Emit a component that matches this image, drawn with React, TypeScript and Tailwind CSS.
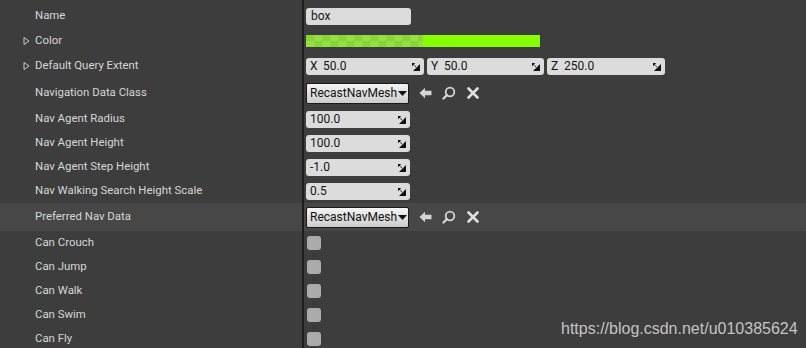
import React from "react";

const font = { fontFamily: "Roboto, 'Liberation Sans', sans-serif" };

function Spin() {
  return (
    <svg width="9" height="9" viewBox="0 0 9 9" className="shrink-0">
      <path d="M1 1 L4.2 1 L2.8 2.4 L5.2 4.8 L4.8 5.2 L2.4 2.8 L1 4.2 Z" fill="#111" />
      <path d="M9 2 L9 9 L2 9 Z" fill="#111" />
    </svg>
  );
}

function Tri() {
  return (
    <svg width="7" height="9" viewBox="0 0 7 9" className="absolute left-[23px] top-1/2 -translate-y-1/2">
      <path d="M1 1 L6 4.5 L1 8 Z" fill="none" stroke="#c8c8c8" strokeWidth="1" />
    </svg>
  );
}

function NumField({ value, w = "w-[104px]", prefix }: { value: string; w?: string; prefix?: string }) {
  return (
    <div className={`${w} h-[17px] rounded-[3px] bg-[#dcdcdc] flex items-center pl-[4px] pr-[4px] text-[12px] text-[#141414]`}>
      {prefix && <span className="w-[13px]">{prefix}</span>}
      <span className="flex-1">{value}</span>
      <Spin />
    </div>
  );
}

function ObjectPicker() {
  return (
    <div className="flex items-center">
      <div className="w-[103px] h-[21px] border border-[#1a1a1a] rounded-[2px] bg-gradient-to-b from-[#f4f4f4] to-[#cdcdcd] flex items-center pl-[3px] text-[12px] text-[#111]">
        <span>RecastNavMesh</span>
        <svg width="9" height="5" viewBox="0 0 9 5" className="ml-[1px] mt-[1px]">
          <path d="M0 0 L9 0 L4.5 5 Z" fill="#111" />
        </svg>
      </div>
      <svg width="13" height="12" viewBox="0 0 13 12" className="ml-[10px]">
        <path d="M0.5 6 L6 0.8 L6 3.8 L12.5 3.8 L12.5 8.2 L6 8.2 L6 11.2 Z" fill="#d4d4d4" />
      </svg>
      <svg width="14" height="14" viewBox="0 0 14 14" className="ml-[10px]">
        <circle cx="8" cy="6" r="4.3" fill="none" stroke="#d4d4d4" strokeWidth="1.8" />
        <path d="M5 9 L1.5 12.5" stroke="#d4d4d4" strokeWidth="2.4" strokeLinecap="round" />
      </svg>
      <svg width="12" height="12" viewBox="0 0 12 12" className="ml-[11px]">
        <path d="M1.5 1.5 L10.5 10.5 M10.5 1.5 L1.5 10.5" stroke="#e0e0e0" strokeWidth="2.6" strokeLinecap="round" />
      </svg>
    </div>
  );
}

function Check() {
  return <div className="w-[14px] h-[14px] rounded-[3px] bg-[#ababab] ml-[1px]" />;
}

function ColorBar() {
  const cells = Array.from({ length: 15 });
  return (
    <div className="flex w-[234px] h-[12px]">
      <div className="w-[117px] flex flex-col overflow-hidden">
        {[0, 1].map((r) => (
          <div key={r} className="flex h-[6px]">
            {cells.map((_, i) => (
              <div
                key={i}
                className={(i + r) % 2 === 0 ? "w-[8px] shrink-0 bg-[#86d534]" : "w-[8px] shrink-0 bg-[#93e044]"}
              />
            ))}
          </div>
        ))}
      </div>
      <div className="flex-1 bg-[#88ff00]" />
    </div>
  );
}

type Row = { label: string; h: string; tri?: boolean; hl?: boolean; value: React.ReactNode };

const rows: Row[] = [
  {
    label: "Name",
    h: "h-[24px]",
    value: (
      <div className="w-[105px] h-[17px] rounded-[3px] bg-[#dcdcdc] flex items-center pl-[5px] text-[12px] text-[#141414]">
        box
      </div>
    ),
  },
  { label: "Color", h: "h-[25px]", tri: true, value: <ColorBar /> },
  {
    label: "Default Query Extent",
    h: "h-[26px]",
    tri: true,
    value: (
      <div className="flex gap-[3px]">
        <NumField w="w-[118px]" prefix="X" value="50.0" />
        <NumField w="w-[117px]" prefix="Y" value="50.0" />
        <NumField w="w-[118px]" prefix="Z" value="250.0" />
      </div>
    ),
  },
  { label: "Navigation Data Class", h: "h-[28px]", value: <ObjectPicker /> },
  { label: "Nav Agent Radius", h: "h-[24px]", value: <NumField value="100.0" /> },
  { label: "Nav Agent Height", h: "h-[24px]", value: <NumField value="100.0" /> },
  { label: "Nav Agent Step Height", h: "h-[24px]", value: <NumField value="-1.0" /> },
  { label: "Nav Walking Search Height Scale", h: "h-[24px]", value: <NumField value="0.5" /> },
  { label: "Preferred Nav Data", h: "h-[28px]", hl: true, value: <ObjectPicker /> },
  { label: "Can Crouch", h: "h-[24px]", value: <Check /> },
  { label: "Can Jump", h: "h-[24px]", value: <Check /> },
  { label: "Can Walk", h: "h-[24px]", value: <Check /> },
  { label: "Can Swim", h: "h-[24px]", value: <Check /> },
  { label: "Can Fly", h: "h-[24px]", value: <Check /> },
];

export default function App() {
  return (
    <div className="relative w-[806px] h-[348px] overflow-hidden bg-[#3d3d3d] pt-[4px]" style={font}>
      {rows.map((row) => (
        <div key={row.label} className={`flex ${row.h} ${row.hl ? "bg-[#474747]" : ""}`}>
          <div className="relative w-[302px] flex items-center pl-[35px] text-[11.4px] text-[#d6d6d6]">
            {row.tri && <Tri />}
            {row.label}
          </div>
          <div className="w-[2px] bg-[#1c1c1c]" />
          <div className="flex-1 flex items-center pl-[2px]">{row.value}</div>
        </div>
      ))}
      <div className="absolute left-[302px] top-0 w-[2px] h-[4px] bg-[#1c1c1c]" />
      <div
        className="absolute left-[561px] top-[317px] text-[16px] text-[#c4c4c4]"
        style={{ fontFamily: "'Liberation Sans', Arial, sans-serif" }}
      >
        https://blog.csdn.net/u010385624
      </div>
    </div>
  );
}
